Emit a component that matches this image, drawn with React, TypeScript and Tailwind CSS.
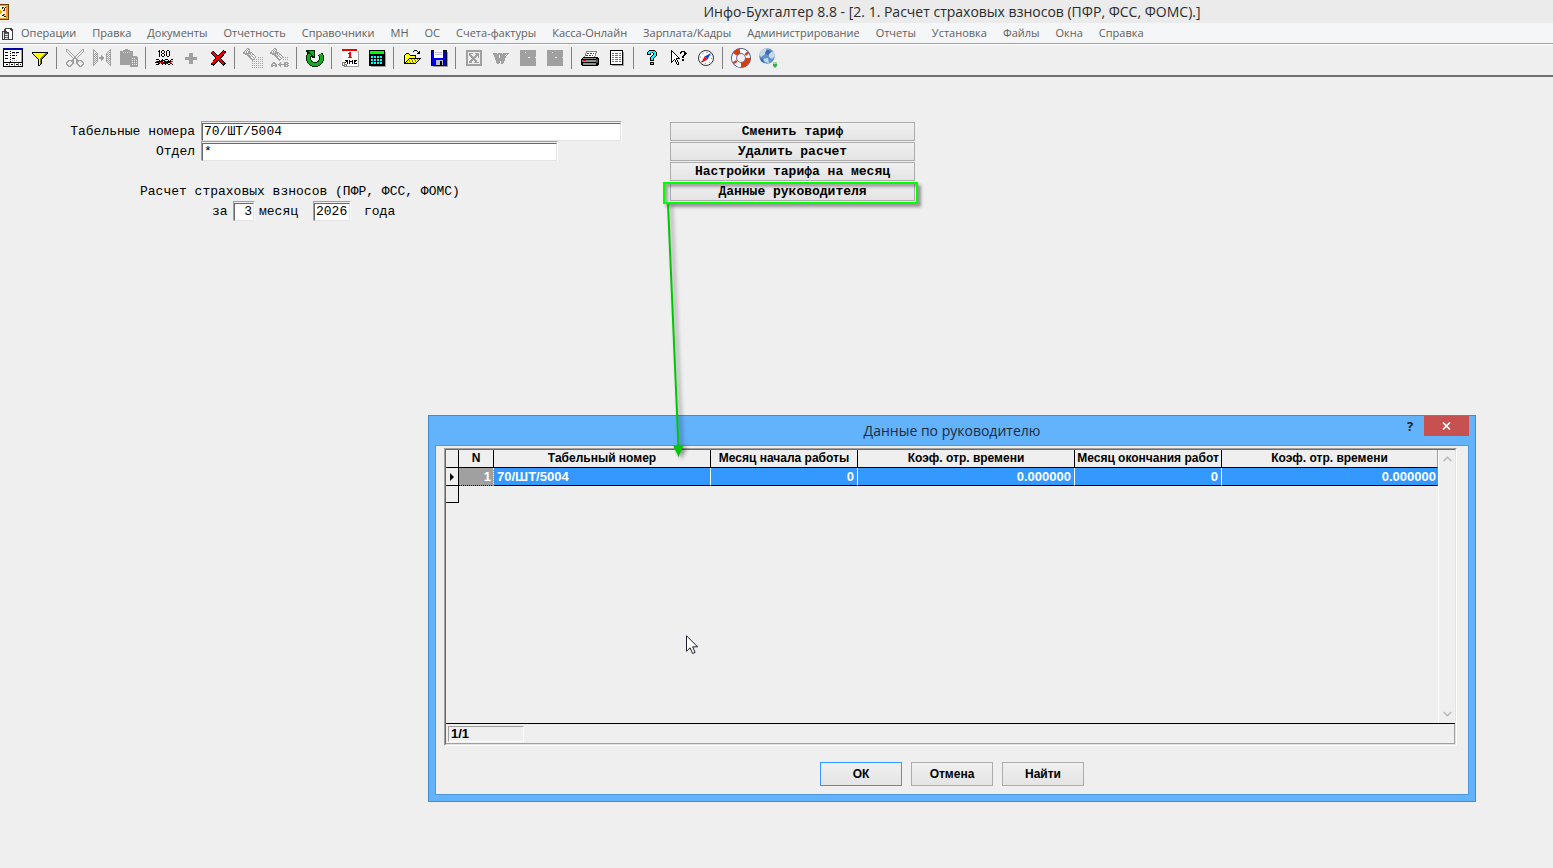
import React from 'react';

type Art = { label: string; art: React.ReactNode };

const GRAY = '#a0a0a0';

/* Small bitmaps: every character is one pixel, looked up in the palette. */
const PALETTE: Record<string, string> = {
  k: '#000000', w: '#ffffff', g: '#a0a0a0', y: '#ffff00', o: '#808000', r: '#ff0000',
  b: '#0000ff', n: '#00008b', c: '#00ffff', e: '#00c000', d: '#606060', s: '#c0c0c0',
};

function Bits({ x, y, rows }: { x: number; y: number; rows: string[] }) {
  return (
    <>
      {rows.flatMap((row, j) =>
        [...row].map((ch, i) =>
          ch === '.' ? null : (
            <rect key={`${i}-${j}`} x={x + i} y={y + j} width="1" height="1" fill={PALETTE[ch]} />
          ),
        ),
      )}
    </>
  );
}

const dots = (x: number, y: number, w: number, h: number) =>
  Array.from({ length: h }, (_, j) =>
    Array.from({ length: w }, (_, i) =>
      i % 2 === 0 && j % 2 === 0 ? (
        <rect key={`${i}-${j}`} x={x + i} y={y + j} width="1" height="1" fill={GRAY} />
      ) : null,
    ),
  );

const flashlight = [
  '....gg........',
  '...g.gg.......',
  '..g.g.g.......',
  '.g.g.gg.......',
  'gg.g.gggg.....',
  'gggggggg.g....',
  '..gggg.g.gg...',
  '....ggg.g..g..',
  '.....ggg.g..g.',
  '......gg..g.g.',
  '.......gg..g..',
  '........ggg...',
  '.........g....',
];

const groups: Art[][] = [
  [
    {
      label: 'Журнал',
      art: (
        <>
          <rect x="0" y="0" width="20" height="19" fill="#000" />
          <rect x="1" y="2" width="18" height="12" fill="#fff" />
          <rect x="0" y="0" width="20" height="2" fill="#0000a0" />
          <rect x="1" y="15" width="18" height="3" fill="#fff" />
          <path d="M2 4.5h4M2 7.5h3M2 10.5h4M9 4.5h8M9 7.5h5M9 10.5h4" stroke="#000" strokeDasharray="3 1" />
          <path d="M7.5 3v11" stroke="#000" strokeDasharray="1 1" />
          <path d="M9 5.5h6M9 12.5h6" stroke="#a0a0a0" strokeDasharray="1 1" />
          <path d="M18.5 2v12" stroke="#a0a0a0" />
          <path d="M3 16.5h2M8 16.5h2M13 16.5h2M17 16.5h1" stroke="#000" />
          <path d="M6.5 15v3M11.5 15v3M15.500 15v3" stroke="#808080" />
        </>
      ),
    },
    {
      label: 'Фильтр',
      art: (
        <Bits x={2} y={4} rows={[
          'kkkkkkkkkkkkkkkk',
          'kywyyyyyyyyyyook',
          '.kywyyyyyyyyook.',
          '..kywyyyyyyook..',
          '...kywyyyyook...',
          '....kyyyyook....',
          '.....kyyook.....',
          '......kyok......',
          '......kyok......',
          '......kyok......',
          '......kyok......',
          '......kyok......',
          '......kyk.......',
          '......kk........',
        ]} />
      ),
    },
  ],
  [
    {
      label: 'Вырезать',
      art: (
        <Bits x={1} y={1} rows={[
          'gg..............gg',
          'g.g............g.g',
          'g..g..........g..g',
          '.g..g........g..g.',
          '..g..g......g..g..',
          '...g..g....g..g...',
          '....g..g..g..g....',
          '.....g..gg..g.....',
          '......g.gg.g......',
          '.......gggg.......',
          '......gg..gg......',
          '..gggggg..gggggg..',
          '.gg..ggg..ggg..gg.',
          'gg....gg..gg....gg',
          'g.....gg..gg.....g',
          'gg...gg....gg...gg',
          '.gg.gg......gg.gg.',
          '..ggg........ggg..',
        ]} />
      ),
    },
    {
      label: 'Копировать',
      art: (
        <Bits x={1} y={1} rows={[
          'g................g',
          'gg..............gg',
          'g.g............g.g',
          'g..g..........g.gg',
          'g.g.g........g.g.g',
          'gg.gg........gg.gg',
          'g.g.g...g....g.g.g',
          'gg.gg...gg...gg.gg',
          'g.g.g.ggggg..g.g.g',
          'gg.gg.ggggg..gg.gg',
          'g.g.g...gg...g.g.g',
          'gg.gg...g....gg.gg',
          'g.g.g........g.g.g',
          'gg.g..........g.gg',
          'g.g............g.g',
          'gg..............gg',
          'g................g',
        ]} />
      ),
    },
    {
      label: 'Вставить',
      art: (
        <>
          <path d="M1 3h3V2h2V1h3v1h2v1h3v5h-3v9H1z" fill={GRAY} />
          <path d="M4 4.5h7" stroke="#d8d8d8" strokeDasharray="1 1" />
          <path d="M11 8h6l2 2v9h-8z" fill={GRAY} />
          <path d="M13 10.5h4M13 12.5h5M13 14.5h5M13 16.5h5" stroke="#efefef" strokeDasharray="1 1" />
        </>
      ),
    },
  ],
  [
    {
      label: 'Сумма',
      art: (
        <Bits x={1} y={2} rows={[
          '....k..kk...kk....',
          '...kk.k..k.k..k...',
          '....k.k..k.k..k...',
          '....k..kk..k..k...',
          '....k.k..k.k..k...',
          '....k.k..k.k..k...',
          '....k..kk...kk....',
          '..................',
          '..................',
          '.kkk...k..kkk...kk',
          '....k.kkkk...k.k..',
          '.rkkkkkk.kkrkkkkrr',
          'kkkkrrkrkkkkkkkr..',
          '...kk.kkkkkrk..kk.',
          '.kkk...k..k..kk..k',
        ]} />
      ),
    },
    { label: 'Добавить', art: <path d="M8 5h4v4h4v3h-4v4H8v-4H4V9h4z" fill={GRAY} /> },
    {
      label: 'Удалить',
      art: (
        <>
          <path d="M4 4l13 13M17 3L4 17" stroke="#000" strokeWidth="4" />
          <path d="M4 4l12 12M16 4L4 16" stroke="#f00000" strokeWidth="2" />
        </>
      ),
    },
  ],
  [
    {
      label: 'Поиск',
      art: (
        <>
          <Bits x={0} y={0} rows={flashlight} />
          {dots(9, 13, 1, 7)}
          {dots(11, 11, 9, 9)}
          {dots(15, 9, 5, 2)}
        </>
      ),
    },
    {
      label: 'Замена',
      art: (
        <>
          <Bits x={0} y={0} rows={flashlight} />
          {dots(13, 9, 6, 4)}
          <Bits x={1} y={14} rows={[
            '..gg.....g...gggg.',
            '.gggg...gg...gg.gg',
            'gg..gg.gggggggggg.',
            'gggggg..gg...gg.gg',
            'gg..gg...g...gggg.',
          ]} />
        </>
      ),
    },
  ],
  [
    {
      label: 'Обновить',
      art: (
        <>
          <path d="M5 6A6.500 6.500 0 1 0 15 6" stroke="#002800" strokeWidth="5" fill="none" />
          <path d="M1 2h9v8H8L2 6z" fill="#002800" />
          <path d="M5 6A6.500 6.500 0 1 0 15 6" stroke="#18a828" strokeWidth="3" fill="none" />
          <path d="M3 3h6v6z" fill="#18a828" />
        </>
      ),
    },
  ],
  [
    {
      label: 'Календарь',
      art: (
        <>
          <path d="M4 3h15v16H4z" fill="#a0a0a0" />
          <path d="M2 3h16v15H7l-5-4z" fill="#fff" />
          <rect x="2" y="1" width="15" height="2" fill="#f00000" />
          <Bits x={7} y={4} rows={['..rr..', '.rrr..', '..rr..', '..rr..', '..rr..', '.rrrr.']} />
          <Bits x={4} y={12} rows={['.kkk.k..k.kkk', '..kk.kkkk.kk.', '.k.k.k..k.k..', 'k..k.k..k.kkk']} />
          <path d="M2 14h2v2h2v2H4v-1H2z" fill="#efefef" stroke="#808080" strokeWidth="1" />
        </>
      ),
    },
    {
      label: 'Калькулятор',
      art: (
        <>
          <path d="M4 4h15v15H4z" fill="#a0a0a0" />
          <rect x="2" y="2" width="16" height="16" fill="#000" />
          <rect x="3" y="3" width="14" height="3" fill="#00ff00" />
          <path d="M4 9h12M4 12h12M4 15h12" stroke="#00ffff" strokeWidth="2" strokeDasharray="2 1" />
        </>
      ),
    },
  ],
  [
    {
      label: 'Открыть',
      art: (
        <Bits x={2} y={2} rows={[
          '..........kkk....',
          '.........k...k.k.',
          '..............kk.',
          '..kkk........kkk.',
          '.kywyk...........',
          'kywywykkkkkk.....',
          'kwywywywywyk.....',
          'kywywywywywk.....',
          'kwywykkkkkkkkkkkk',
          'kywykyyoyyoyyoyk.',
          'kwykyoyyoyyoyyk..',
          'kykyyoyyoyyoyk...',
          'kkyoyyoyyoyyk....',
          'kkkkkkkkkkkk.....',
        ]} />
      ),
    },
    {
      label: 'Сохранить',
      art: (
        <>
          <path d="M4 4h15v15H4z" fill="#a0a0a0" />
          <rect x="2" y="2" width="16" height="16" fill="#000" />
          <rect x="3" y="3" width="14" height="14" fill="#0000ee" />
          <rect x="5" y="2" width="9" height="8" fill="#fff" />
          <path d="M6 4.5h7M6 6.5h7" stroke="#c0c0c0" />
          <rect x="6" y="12" width="9" height="6" fill="#000" />
          <rect x="7" y="12" width="7" height="5" fill="#c0c0c0" />
          <rect x="11" y="13" width="2" height="4" fill="#000" />
        </>
      ),
    },
  ],
  [
    {
      label: 'Excel',
      art: (
        <>
          <path d="M3 3h14v14H3z" fill="none" stroke={GRAY} strokeWidth="2" />
          <path d="M5.5 6l8 9M14.5 6l-9 8" stroke={GRAY} strokeWidth="2" />
          <path d="M5 5.500h4M11 5.500h4M14.5 5v5M5 14.5h3M10 14.5h5" stroke={GRAY} />
        </>
      ),
    },
    {
      label: 'Word',
      art: (
        <Bits x={2} y={5} rows={[
          'gggg.gggg.gggggg',
          'ggggggggggggg.g.',
          '.ggggg.ggggg.g..',
          '.ggggg.gggggg...',
          '..gggg.gggggg...',
          '..gggggggggg....',
          '..gggggggggg....',
          '...ggggggggg....',
          '...gggg.ggg.....',
          '...gggg.ggg.....',
          '....gg..gg......',
        ]} />
      ),
    },
    { label: 'Экспорт', art: <path d="M2 2h16v7h-1v1h1v8H2z M7 4v1h1V4z M10 9v1h2V9z" fillRule="evenodd" fill={GRAY} /> },
    { label: 'Импорт', art: <path d="M2 2h16v7h-1v1h1v8H2z M7 4v1h1V4z M10 9v1h2V9z" fillRule="evenodd" fill={GRAY} /> },
  ],
  [
    {
      label: 'Печать',
      art: (
        <>
          <path d="M7 3h10l-3 7H4z" fill="#fff" stroke="#808080" />
          <path d="M7 5.5h7M6 7.5h7" stroke="#2040c0" strokeDasharray="2 1" />
          <path d="M3 9h15l1 2v5l-2 2H2l-1-2v-5z" fill="#000" />
          <path d="M3 10h13v1H3zM2 12h14v2H2zM3 15h13v2H3z" fill="#909090" />
          <path d="M16 11h2v4h-2z" fill="#505050" />
          <rect x="3" y="12" width="3" height="1" fill="#ff0000" />
        </>
      ),
    },
    {
      label: 'Просмотр',
      art: (
        <>
          <path d="M5 4h12v14H5z" fill="#a0a0a0" />
          <path d="M3.500 2.500h12v14h-12z" fill="#fff" stroke="#000" />
          <path d="M5 5.500h9M5 7.500h9M5 9.500h9M5 11.500h9M5 13.500h9" stroke="#707070" strokeDasharray="2 1 3 1" />
        </>
      ),
    },
  ],
  [
    {
      label: 'Помощь',
      art: (
        <Bits x={5} y={2} rows={[
          '..kkkkkk..',
          '.kcccccck.',
          'kcccckccck',
          'kcck..kcck',
          'kkkk..kcck',
          '.....kccck',
          '....kccck.',
          '...kccck..',
          '...kcck...',
          '...kcck...',
          '...kkkk...',
          '..........',
          '...kkkk...',
          '...kcck...',
          '...kkkk...',
        ]} />
      ),
    },
    {
      label: 'Что это?',
      art: (
        <Bits x={2} y={2} rows={[
          'k................',
          'kk........kkkk...',
          'kwk......kk..kk..',
          'kwwk.....k...kkk.',
          'kwwwk........kk..',
          'kwwwwk......kk...',
          'kwwwwwk....kk....',
          'kwwwwwwk...kk....',
          'kwwwwkkkk........',
          'kwwkwk.....kk....',
          'kwk.kwk....kk....',
          'kk..kwk..........',
          'k....kwk.........',
          '.....kwk.........',
          '......kk.........',
        ]} />
      ),
    },
    {
      label: 'Навигатор',
      art: (
        <g shapeRendering="geometricPrecision">
          <circle cx="10" cy="10" r="7.500" fill="#fff" stroke="#303030" />
          <circle cx="10" cy="10" r="5.500" fill="none" stroke="#606060" strokeDasharray="1 3.300" />
          <path d="M15 5l-3.500 6.500-3-3z" fill="#1040f0" />
          <path d="M5 15l3.500-6.500 3 3z" fill="#f01010" />
        </g>
      ),
    },
  ],
  [
    {
      label: 'Поддержка',
      art: (
        <g shapeRendering="geometricPrecision" fill="none">
          <circle cx="10" cy="10" r="7" stroke="#303878" strokeWidth="6" />
          <circle cx="10" cy="10" r="7" stroke="#f8f8ff" strokeWidth="4.500" />
          <path d="M4 6.300A7 7 0 0 1 9 3.100M17 10A7 7 0 0 1 10 17" stroke="#d04010" strokeWidth="5" />
          <path d="M15 4.800l1.500 1.800M3.600 13l1.200 2" stroke="#d04010" strokeWidth="4" />
        </g>
      ),
    },
    {
      label: 'Интернет',
      art: (
        <g shapeRendering="geometricPrecision">
          <circle cx="9" cy="8" r="7.800" fill="#6090cc" />
          <path d="M3 3c3-3 6-3 8-2L8 4 6 7 3 9 1 7zM11 5l5-2 1 5-3 3-3-2zM5 11l5-1 1 5-4-1z" fill="#c8d8e8" />
          <path d="M9 1l4 3-3 3-3-2zM2 10l3 1 1 4-3-2z" fill="#4068a8" />
          <path d="M15 15h4v3l-2 2-2-2z" fill="#38b050" />
          <path d="M15 14h4v2h-4z" fill="#a0d8a0" />
        </g>
      ),
    },
  ],
];

const menu = [
  'Операции', 'Правка', 'Документы', 'Отчетность', 'Справочники', 'МН', 'ОС', 'Счета-фактуры',
  'Касса-Онлайн', 'Зарплата/Кадры', 'Администрирование', 'Отчеты', 'Установка', 'Файлы', 'Окна', 'Справка',
];

const sunken =
  'border border-t-[#a0a0a0] border-l-[#a0a0a0] border-r-white border-b-white';
const field =
  'h-full w-full border border-t-[#696969] border-l-[#696969] border-r-[#e3e3e3] border-b-[#e3e3e3] bg-white px-px outline-none';

function Field({ id, label, value, box, align = '' }: {
  id: string; label: string; value: string; box: string; align?: string;
}) {
  return (
    <div className={`h-5 shrink-0 ${sunken} ${box}`}>
      <input id={id} aria-label={label} defaultValue={value} className={`${field} ${align}`} />
    </div>
  );
}

const actions = ['Сменить тариф', 'Удалить расчет', 'Настройки тарифа на месяц', 'Данные руководителя'];

const columns = [
  { title: 'Табельный номер', value: '70/ШТ/5004', align: 'text-left' },
  { title: 'Месяц начала работы', value: '0', align: 'text-right' },
  { title: 'Коэф. отр. времени', value: '0.000000', align: 'text-right' },
  { title: 'Месяц окончания работ', value: '0', align: 'text-right' },
  { title: 'Коэф. отр. времени', value: '0.000000', align: 'text-right' },
];

function Dialog() {
  return (
    <section
      role="dialog"
      aria-labelledby="dialog-title"
      className="absolute top-[415px] left-[428px] flex h-[387px] w-[1048px] flex-col border border-[#4a8ac6] bg-[#63b2fc] px-1.5 pb-1.5 font-['Liberation_Sans',sans-serif] text-[13px] font-bold"
    >
      <header className="relative flex h-[29px] shrink-0 items-center justify-center">
        <h2 id="dialog-title" className="font-['Open_Sans','Noto_Sans',sans-serif] text-[14px] leading-5 font-normal text-[#1c2a38]">
          Данные по руководителю
        </h2>
        <div className="absolute top-0 right-0 flex h-5">
          <button type="button" aria-label="Справка" className="w-7 font-['Open_Sans',sans-serif] text-[13px] leading-5 text-[#1e1e1e]">
            ?
          </button>
          <button type="button" aria-label="Закрыть" className="flex w-[45px] items-center justify-center bg-[#c75050]">
            <svg width="9" height="8" viewBox="0 0 9 8">
              <path d="M1 .5l7 7M8 .5l-7 7" stroke="#fff" strokeWidth="1.700" />
            </svg>
          </button>
        </div>
      </header>
      <div className="flex min-h-0 flex-1 flex-col border border-[#4f96da] bg-[#efefef] pt-0.5 pr-[11px] pl-2">
        <div className={`shrink-0 ${sunken}`}>
          <div className="flex h-[296px] flex-col border border-t-[#696969] border-l-[#696969] border-r-[#e3e3e3] border-b-[#e3e3e3]">
            <div className="flex min-h-0 flex-1 border-b border-black">
              <div className="min-w-0 flex-1">
                <table className="w-full table-fixed border-separate border-spacing-0">
                  <colgroup>
                    <col className="w-[13px]" />
                    <col className="w-[35px]" />
                    <col className="w-[217px]" />
                    <col className="w-[147px]" />
                    <col className="w-[217px]" />
                    <col className="w-[147px]" />
                    <col />
                  </colgroup>
                  <thead>
                    <tr className="h-[18px]">
                      <th className="border-r border-b border-black p-0" />
                      <th className="border-r border-b border-black p-0 align-top text-[12px] leading-4">N</th>
                      {columns.map((c, i) => (
                        <th key={i} className="overflow-hidden border-r border-b border-black p-0 align-top text-[12px] leading-4 whitespace-nowrap last:border-r-[#a0a0a0]">
                          {c.title}
                        </th>
                      ))}
                    </tr>
                  </thead>
                  <tbody>
                    <tr className="h-[18px] text-white">
                      <td className="border-r border-b border-black p-0 pl-1">
                        <svg width="5" height="8" viewBox="0 0 5 8" className="block">
                          <path d="M0 0l4 4-4 4z" fill="#000" />
                        </svg>
                      </td>
                      <td className="border-r border-b border-dotted border-r-white border-b-black bg-[#a0a0a0] p-0 pr-0.5 text-right leading-4">1</td>
                      {columns.map((c, i) => (
                        <td key={i} className={`border-r border-b border-r-white border-b-black bg-[#3399ff] px-[3px] py-0 leading-4 last:border-r-[#3399ff] last:pr-px ${c.align}`}>
                          {c.value}
                        </td>
                      ))}
                    </tr>
                    <tr className="h-[17px]">
                      <td className="border-r border-b border-black p-0" />
                      <td colSpan={6} className="p-0" />
                    </tr>
                  </tbody>
                </table>
              </div>
              <div className="flex w-[17px] shrink-0 flex-col items-center justify-between border-l border-white py-1.5">
                <svg width="9" height="6" viewBox="0 0 9 6" fill="none" stroke="#b8b8b8" strokeWidth="1.500">
                  <path d="M.7 5L4.500 1.200 8.300 5" />
                </svg>
                <svg width="9" height="6" viewBox="0 0 9 6" fill="none" stroke="#b8b8b8" strokeWidth="1.500">
                  <path d="M.7 1L4.500 4.800 8.300 1" />
                </svg>
              </div>
            </div>
            <div className="h-5 shrink-0 border-r border-b border-[#a0a0a0] px-0.5 py-0.5">
              <div className={`h-4 w-[76px] pl-0.5 leading-[14px] ${sunken}`}>1/1</div>
            </div>
          </div>
        </div>
        <div className="-mr-[3px] flex justify-center gap-[9px] pt-4">
          {['ОК', 'Отмена', 'Найти'].map((t, i) => (
            <button
              key={t}
              type="button"
              className={`h-6 w-[82px] border bg-linear-to-b from-[#f0f0f0] to-[#e4e4e4] text-[12px] leading-5 ${i === 0 ? 'border-[#3399ff]' : 'border-[#acacac]'}`}
            >
              {t}
            </button>
          ))}
        </div>
      </div>
    </section>
  );
}

export default function App() {
  return (
    <div className="relative flex min-h-screen flex-col overflow-hidden bg-[#efefef] text-black">
      <header className="flex h-[23px] items-center bg-[#ebebeb]">
        <svg width="9" height="16" viewBox="0 0 9 16" shapeRendering="crispEdges" aria-hidden="true">
          <path d="M0 0h9v16H0z" fill="#704000" />
          <path d="M0 1h8v14H0z" fill="#e0a020" />
          <path d="M0 2h6v12H0z" fill="#fff4d8" />
          <path d="M2 3h1v2H2zM4 4h1v2H4zM5 3h1v1H5zM2 11h2v1H2zM4 12h2v1H4zM3 6h1v1H3z" fill="#202020" />
          <path d="M3 3h1v1H3zM4 6h1v1H4zM3 10h2v1H3z" fill="#b02020" />
          <path d="M0 6h1v1h1v2H1v1H0z" fill="#e8b000" />
        </svg>
        <h1 className="flex-1 pl-[342px] text-center font-['Open_Sans','Noto_Sans',sans-serif] text-[14px] leading-5 text-[#2c2c2c]">
          Инфо-Бухгалтер 8.8 - [2. 1. Расчет страховых взносов (ПФР, ФСС, ФОМС).]
        </h1>
      </header>
      <nav className="flex h-5 items-center gap-4 bg-[#f5f6f7] pl-0.5 font-['Open_Sans','Noto_Sans',sans-serif] text-[11px] leading-5 text-[#606060]">
        <svg width="11" height="12" viewBox="0 0 11 12" shapeRendering="crispEdges" aria-hidden="true" className="-mr-2 mt-0.5">
          <path d="M3 0h6l2 2v10H0V3h2z" fill="#404040" />
          <path d="M4 1h4v1h1v1h1v8H7V4H5V3H4z" fill="#fff" />
          <path d="M1 4h1v7H1zM3 5h3v6H3z" fill="#e8e8e8" />
          <path d="M3 5h3v1H3zM3 7h3v1H3zM3 9h3v1H3z" fill="#606060" />
        </svg>
        {menu.map((m) => (
          <a key={m} href="#" className="whitespace-nowrap">{m}</a>
        ))}
      </nav>
      <div role="toolbar" aria-label="Панель инструментов" className="flex h-[34px] items-center border-t border-b-2 border-t-[#a0a0a0] border-b-[#707070] pb-[3px] shadow-[inset_0_1px_0_#ffffff]">
        {groups.map((g, i) => (
          <div key={i} className="flex items-center">
            {i > 0 && <span className="mr-[5px] ml-0.5 h-[22px] w-px bg-[#808080]" />}
            {g.map((b) => (
              <button key={b.label} type="button" aria-label={b.label} className="flex w-[27px] justify-center">
                <svg width="21" height="20" viewBox="0 0 21 20" shapeRendering="crispEdges">{b.art}</svg>
              </button>
            ))}
          </div>
        ))}
      </div>

      <main className="flex pt-11 font-['Liberation_Mono',monospace] text-[13px] leading-5">
        <form className="w-[622px] shrink-0">
          <div className="flex">
            <label htmlFor="tab" className="w-[201px] shrink-0 pt-px pr-1.5 text-right leading-[19px]">Табельные номера</label>
            <Field id="tab" label="Табельные номера" value="70/ШТ/5004" box="w-[421px]" />
          </div>
          <div className="flex">
            <label htmlFor="dep" className="w-[201px] shrink-0 pt-px pr-1.5 text-right leading-[19px]">Отдел</label>
            <Field id="dep" label="Отдел" value="*" box="w-[357px]" />
          </div>
          <p className="pt-[21px] pl-[140px] leading-[19px]">Расчет страховых взносов (ПФР, ФСС, ФОМС)</p>
          <div className="flex pl-[212px]">
            <label htmlFor="month" className="w-[21px] pt-px leading-[19px]">за</label>
            <Field id="month" label="Месяц" value="3" box="w-[22px]" align="text-right" />
            <span className="w-[58px] pt-px pl-1 leading-[19px]">месяц</span>
            <Field id="year" label="Год" value="2026" box="w-[38px]" />
            <span className="pt-px pl-[13px] leading-[19px]">года</span>
          </div>
        </form>
        <div className="relative ml-12 flex w-[245px] flex-col gap-px pt-px">
          {actions.map((a) => (
            <button key={a} type="button" className="h-[19px] border border-[#acacac] bg-linear-to-b from-[#f0f0f0] to-[#e4e4e4] pt-px font-bold leading-4">
              {a}
            </button>
          ))}
          <div className="pointer-events-none absolute top-[61px] -left-[7px] h-[22px] w-[255px] border-2 border-[#00ff00] shadow-[3px_3px_3px_#00000060,inset_3px_3px_3px_#00000050]" />
        </div>
      </main>

      <Dialog />

      <svg className="pointer-events-none absolute top-[203px] left-[660px]" width="40" height="262" viewBox="0 0 40 262" aria-hidden="true">
        <g className="drop-shadow-[3px_2px_2px_#00000070]">
          <path d="M8 1L18.500 244" stroke="#00c800" strokeWidth="2" />
          <path d="M13 242.500l10.500-.5-5 12z" fill="#00c800" />
        </g>
      </svg>
      <svg className="pointer-events-none absolute top-[635px] left-[686px]" width="13" height="20" viewBox="0 0 13 20" aria-hidden="true">
        <path d="M.5.8v15.400l3.600-3.400 2.500 5.700 2.500-1.100-2.500-5.600h5z" fill="#fff" stroke="#202030" />
      </svg>
    </div>
  );
}
